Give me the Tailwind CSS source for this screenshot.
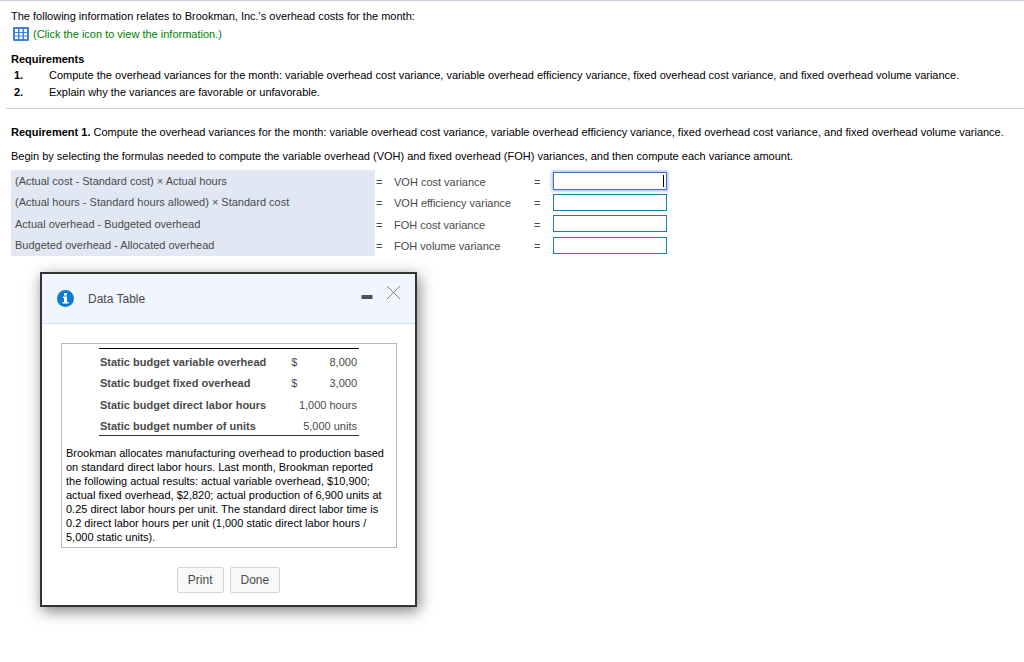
<!DOCTYPE html>
<html lang="en">
  <head>
    <meta charset="UTF-8" />
    <meta name="viewport" content="width=device-width, initial-scale=1.0" />
    <title>Brookman, Inc. - Overhead Variances</title>
    <script src="https://cdn.jsdelivr.net/npm/@tailwindcss/browser@4"></script>
  </head>

  <body class="bg-white text-black text-[11px] leading-4 font-['Liberation_Sans',Arial,sans-serif]">
    <!-- Problem statement -->
    <header class="border-t border-[#c8cde0] pl-[11px] pt-[7px]">
      <p>The following information relates to Brookman, Inc.'s overhead costs for the month:</p>
      <a href="#data-table" class="flex items-center gap-1 pl-0.5 mt-0.5 text-[#008000]">
        <svg class="w-4 h-[14px]" viewBox="0 0 16 14" aria-hidden="true">
          <rect width="16" height="14" rx="1" fill="#3b82d8" />
          <path fill="#fff" d="M2 2h3v3H2zM6.500 2h3v3h-3zM11 2h3v3h-3zM2 6h3v2.500H2zM6.500 6h3v2.500h-3zM11 6h3v2.500h-3zM2 9.500h3v2.500H2zM6.500 9.500h3v2.500h-3zM11 9.500h3v2.500h-3z" />
        </svg>
        (Click the icon to view the information.)
      </a>
      <h2 class="font-bold mt-[9px]">Requirements</h2>
      <ol class="pl-[3px]">
        <li class="flex leading-[17px]"><b class="w-[35px] shrink-0">1.</b>Compute the overhead variances for the month: variable overhead cost variance, variable overhead efficiency variance, fixed overhead cost variance, and fixed overhead volume variance.</li>
        <li class="flex leading-[17px]"><b class="w-[35px] shrink-0">2.</b>Explain why the variances are favorable or unfavorable.</li>
      </ol>
    </header>

    <hr class="ml-1.5 mt-[7px] border-[#c8cde0]" />

    <!-- Requirement 1 -->
    <main class="pl-[11px] pt-[15px]">
      <p><b>Requirement 1.</b> Compute the overhead variances for the month: variable overhead cost variance, variable overhead efficiency variance, fixed overhead cost variance, and fixed overhead volume variance.</p>
      <p class="mt-2">Begin by selecting the formulas needed to compute the variable overhead (VOH) and fixed overhead (FOH) variances, and then compute each variance amount.</p>

      <table class="mt-1.5 h-[86px] text-[#4a4a4a]">
        <tbody>
          <tr>
            <td class="w-[364px] bg-[#e1e8f3] pl-1">(Actual cost - Standard cost) × Actual hours</td>
            <td class="w-[19px] pl-px pt-0.5">=</td>
            <td class="w-[140px] pt-0.5"><label for="voh-cost">VOH cost variance</label></td>
            <td class="w-[19px] pt-0.5">=</td>
            <td>
              <div class="relative">
                <input id="voh-cost" type="text" class="block w-[114px] h-[18px] px-1 text-right border border-[#3f6fd0] shadow-[0_0_3px_1px_rgba(90,130,230,0.6)] outline-none caret-transparent" />
                <span class="absolute right-[3px] top-[3px] w-px h-3 bg-black"></span>
              </div>
            </td>
          </tr>
          <tr>
            <td class="bg-[#e1e8f3] pl-1">(Actual hours - Standard hours allowed) × Standard cost</td>
            <td class="pl-px pt-0.5">=</td>
            <td class="pt-0.5"><label for="voh-efficiency">VOH efficiency variance</label></td>
            <td class="pt-0.5">=</td>
            <td><input id="voh-efficiency" type="text" class="block w-[114px] h-[17px] px-1 text-right border border-[#1583a3]" /></td>
          </tr>
          <tr>
            <td class="bg-[#e1e8f3] pl-1">Actual overhead - Budgeted overhead</td>
            <td class="pl-px pt-0.5">=</td>
            <td class="pt-0.5"><label for="foh-cost">FOH cost variance</label></td>
            <td class="pt-0.5">=</td>
            <td><input id="foh-cost" type="text" class="block w-[114px] h-[17px] px-1 text-right border border-[#1583a3]" /></td>
          </tr>
          <tr>
            <td class="bg-[#e1e8f3] pl-1">Budgeted overhead - Allocated overhead</td>
            <td class="pl-px pt-0.5">=</td>
            <td class="pt-0.5"><label for="foh-volume">FOH volume variance</label></td>
            <td class="pt-0.5">=</td>
            <td><input id="foh-volume" type="text" class="block w-[114px] h-[17px] px-1 text-right border border-[#1583a3]" /></td>
          </tr>
        </tbody>
      </table>
    </main>

    <!-- Data Table window -->
    <section id="data-table" class="ml-10 mt-4 mb-10 w-[377px] border-2 border-[#333] bg-white shadow-[2px_4px_14px_rgba(0,0,0,0.5)]">
      <div class="flex items-center h-[50px] px-[15px] bg-[#f1f6fe] border-b border-[#cde3f5]">
        <svg class="w-[17px] h-[17px]" viewBox="0 0 17 17" aria-hidden="true">
          <circle cx="8.500" cy="8.500" r="8.500" fill="#0a7bd2" />
          <path fill="#fff" d="M7 3h3v2.500H7zM6 6.500h4v5.500h1.500v1.500h-6V12H7V8H6z" />
        </svg>
        <h2 class="ml-3.5 text-xs text-[#4a4a4a]">Data Table</h2>
        <button type="button" aria-label="Minimize" class="ml-auto">
          <svg class="w-3 h-4" viewBox="0 0 12 16"><rect x="0.500" y="4" width="11" height="4" rx="0.500" fill="#505050" /></svg>
        </button>
        <button type="button" aria-label="Close" class="ml-3.5 mb-3">
          <svg class="w-[13px] h-[13px]" viewBox="0 0 13 13" stroke="#777" stroke-width="0.900"><path d="M0 0l13 13M13 0L0 13" /></svg>
        </button>
      </div>

      <div class="ml-[19px] mr-[18px] mt-[19px] border border-[#b8b8b8] pl-1 pr-2 pt-1 pb-[3px]">
        <table class="ml-[33px] w-[260px] h-[88px] border-y border-t-black border-b-[#333] text-[#4a4a4a]">
          <tbody>
            <tr>
              <th class="text-left pl-px pt-1">Static budget variable overhead</th>
              <td class="pl-px pt-1">$</td>
              <td class="text-right pr-0.5 pt-1">8,000</td>
            </tr>
            <tr>
              <th class="text-left pl-px pt-1">Static budget fixed overhead</th>
              <td class="pl-px pt-1">$</td>
              <td class="text-right pr-0.5 pt-1">3,000</td>
            </tr>
            <tr>
              <th class="text-left pl-px pt-1">Static budget direct labor hours</th>
              <td colspan="2" class="text-right pr-0.5 pt-1">1,000 hours</td>
            </tr>
            <tr>
              <th class="text-left pl-px pt-1">Static budget number of units</th>
              <td colspan="2" class="text-right pr-0.5 pt-1">5,000 units</td>
            </tr>
          </tbody>
        </table>
        <p class="mt-2.5 leading-[14px]">Brookman allocates manufacturing overhead to production based on standard direct labor hours. Last month, Brookman reported the following actual results: actual variable overhead, $10,900; actual fixed overhead, $2,820; actual production of 6,900 units at 0.25 direct labor hours per unit. The standard direct labor time is 0.2 direct labor hours per unit (1,000 static direct labor hours / 5,000 static units).</p>
      </div>

      <div class="flex justify-center gap-1.5 mt-[19px] mb-3 text-xs text-[#4a4a4a]">
        <button type="button" class="h-[26px] px-2.5 border border-[#d4d4d4] rounded-xs bg-[#f8f8f8]">Print</button>
        <button type="button" class="h-[26px] px-2.5 border border-[#d4d4d4] rounded-xs bg-[#f8f8f8]">Done</button>
      </div>
    </section>
  </body>
</html>
